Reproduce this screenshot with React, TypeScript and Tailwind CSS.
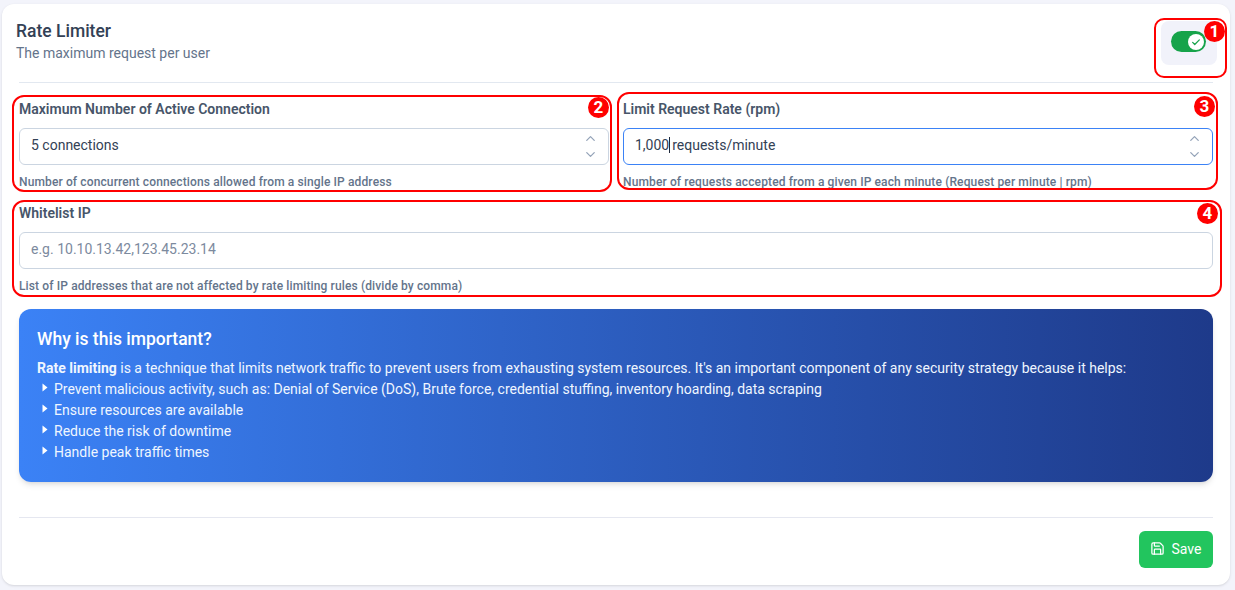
import { ChevronDown, ChevronUp, Save } from 'lucide-react';

const points = [
  'Prevent malicious activity, such as: Denial of Service (DoS), Brute force, credential stuffing, inventory hoarding, data scraping',
  'Ensure resources are available',
  'Reduce the risk of downtime',
  'Handle peak traffic times',
];

function Badge({ n, className }: { n: number; className: string }) {
  return (
    <span className={`absolute flex h-[21px] w-[21px] items-center justify-center rounded-full bg-[#ff0000] text-[17px] font-bold leading-none text-white ${className}`}>
      {n}
    </span>
  );
}

function Stepper() {
  return (
    <div className="flex flex-col gap-[1px] text-[#94a3b8]">
      <ChevronUp size={15} strokeWidth={2} />
      <ChevronDown size={15} strokeWidth={2} />
    </div>
  );
}

export default function App() {
  return (
    <div className="h-[590px] w-[1235px] overflow-hidden bg-[#f3f4fb] pl-[2px] pr-[5px] pt-[4px] font-['Roboto',sans-serif]">
      <div className="h-[581px] rounded-xl bg-white shadow-sm">
        <div className="flex h-[78px] justify-between pl-[14px] pr-[3px]">
          <div className="pt-[16px]">
            <h1 className="text-[17.5px] font-medium leading-[22px] text-[#334155]">Rate Limiter</h1>
            <p className="mt-[1px] text-sm leading-[20px] text-[#64748b]">The maximum request per user</p>
          </div>
          <div className="relative mt-[14px] h-[60px] w-[73px]">
            <div className="absolute inset-0 rounded-[10px] border-2 border-[#ff0000]" />
            <div className="absolute left-[7px] top-[3px] flex h-[44px] w-[56px] items-center justify-center rounded-lg bg-[#f1f2fa]">
              <div className="mb-[3px] mr-[2px] flex h-[21px] w-[35px] items-center justify-end rounded-full bg-[#16a34a] pr-[2px]">
                <div className="flex h-[16px] w-[16px] items-center justify-center rounded-full bg-white">
                  <svg width="10" height="10" viewBox="0 0 24 24" fill="none" stroke="#16a34a" strokeWidth="3" strokeLinecap="round" strokeLinejoin="round">
                    <path d="M4 13l5 5L20 7" />
                  </svg>
                </div>
              </div>
            </div>
            <Badge n={1} className="right-[2px] top-[3px]" />
          </div>
        </div>

        <div className="mx-[17px] h-px bg-[#e2e8f0]" />

        <div className="flex h-[110px] gap-[14px] pl-[17px] pr-[17px]">
          <div className="relative h-full w-[590px] pt-[17px]">
            <div className="absolute -left-[7px] right-[-3px] top-[12px] h-[97px] rounded-xl border-2 border-[#ff0000]" />
            <Badge n={2} className="right-[0px] top-[14px]" />
            <label className="block text-sm font-semibold leading-[18px] text-[#475569]">Maximum Number of Active Connection</label>
            <div className="mt-[10px] flex h-[37px] items-center justify-between rounded-md border border-[#cbd5e1] pl-[11px] pr-[10px]">
              <span className="pb-[3px] text-sm text-[#334155]">5 connections</span>
              <Stepper />
            </div>
            <p className="mt-[10px] text-xs font-medium leading-[14px] tracking-[0.125px] text-[#64748b]">
              Number of concurrent connections allowed from a single IP address
            </p>
          </div>
          <div className="relative h-full w-[590px] pt-[17px]">
            <div className="absolute -left-[6px] right-[-5px] top-[9px] h-[98px] rounded-xl border-2 border-[#ff0000]" />
            <Badge n={3} className="-right-[2px] top-[13px]" />
            <label className="block text-sm font-semibold leading-[18px] text-[#475569]">Limit Request Rate (rpm)</label>
            <div className="mt-[10px] flex h-[37px] items-center justify-between rounded-md border border-[#3b82f6] pl-[11px] pr-[10px]">
              <span className="pb-[3px] text-sm text-[#334155]">
                <span className="border-r border-[#1e293b]">1,000</span>
                <span className="pl-[2px]">requests/minute</span>
              </span>
              <Stepper />
            </div>
            <p className="mt-[10px] text-xs font-medium leading-[14px] tracking-[0.125px] text-[#64748b]">
              Number of requests accepted from a given IP each minute (Request per minute | rpm)
            </p>
          </div>
        </div>

        <div className="relative mx-[17px] h-[104px] w-[1194px] pt-[11px]">
          <div className="absolute -left-[7px] right-[-9px] top-[7px] h-[97px] rounded-xl border-2 border-[#ff0000]" />
          <Badge n={4} className="-right-[5px] top-[10px]" />
          <label className="block text-sm font-semibold leading-[18px] text-[#475569]">Whitelist IP</label>
          <div className="mt-[10px] flex h-[37px] items-center rounded-md border border-[#cbd5e1] pl-[11px]">
            <span className="pb-[3px] text-sm text-[#7c8a9e]">e.g. 10.10.13.42,123.45.23.14</span>
          </div>
          <p className="mt-[10px] text-xs font-medium leading-[14px] tracking-[0.125px] text-[#64748b]">
            List of IP addresses that are not affected by rate limiting rules (divide by comma)
          </p>
        </div>

        <div className="mx-[17px] mt-[12px] h-[173px] w-[1194px] rounded-xl bg-gradient-to-r from-[#3b82f6] to-[#1e3a8a] pl-[18px] pt-[19px] text-white shadow-md">
          <h2 className="text-[17.5px] font-medium leading-[22px]">Why is this important?</h2>
          <p className="mt-[8px] text-sm leading-[21px] text-[#eff6ff]">
            <b className="font-bold">Rate limiting</b> is a technique that limits network traffic to prevent users from exhausting system resources. It's an important component of any security strategy because it helps:
          </p>
          <ul className="-mt-[1px]">
            {points.map((p) => (
              <li key={p} className="flex h-[21px] items-center text-sm text-[#eff6ff]">
                <svg width="6" height="9" viewBox="0 0 6 9" className="ml-[5px] mr-[6px] -mt-[2px] shrink-0" fill="white">
                  <path d="M0.5 0.5L5.5 4.5L0.5 8.5Z" />
                </svg>
                {p}
              </li>
            ))}
          </ul>
        </div>

        <div className="mx-[17px] mt-[35px] h-px w-[1194px] bg-[#e5e7f0]" />

        <div className="mr-[17px] mt-[13px] flex justify-end">
          <button className="flex h-[37px] w-[74px] items-center justify-center gap-[7px] rounded-md bg-[#22c55e] pb-[2px] text-sm text-white">
            <Save size={15} strokeWidth={2} />
            <span className="pr-[1px]">Save</span>
          </button>
        </div>
      </div>
    </div>
  );
}
